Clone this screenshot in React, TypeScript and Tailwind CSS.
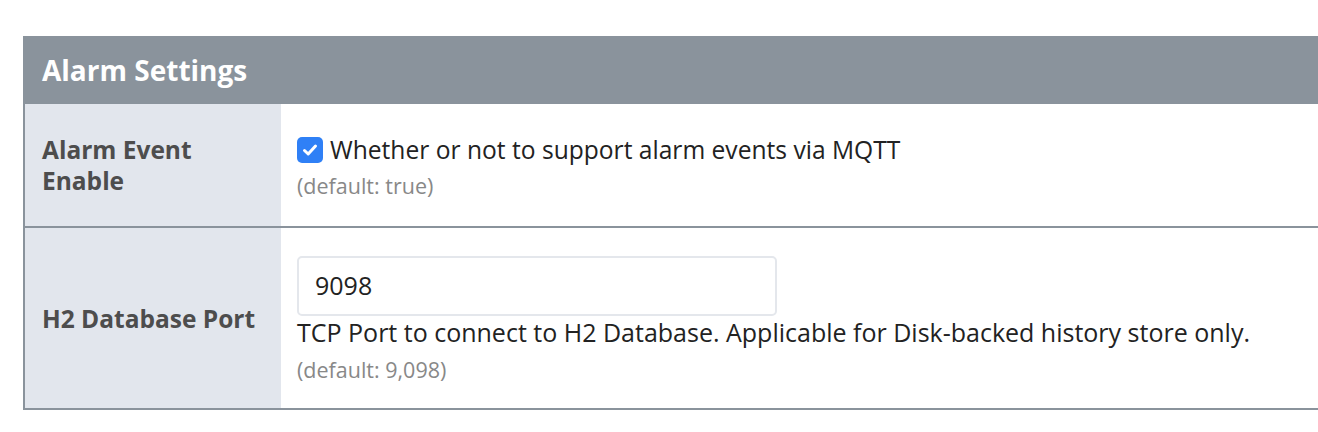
import React from "react";

export default function App() {
  return (
    <div className="w-[1318px] h-[432px] overflow-hidden bg-white pt-[36px] pl-[23px]" style={{ fontFamily: "'Open Sans', 'Noto Sans', sans-serif" }}>
      <div className="w-[1330px] border-l-2 border-[#8a939c]">
        <div className="h-[68px] bg-[#8a939c] flex items-center pl-[17px]">
          <span className="text-white font-bold text-[28px] leading-none">Alarm Settings</span>
        </div>
        <div className="flex h-[124px] border-b-2 border-[#8a939c]">
          <div className="w-[256px] shrink-0 bg-[#e2e6ed] flex items-center pl-[17px]">
            <span className="text-[#4d4d4d] font-bold text-[24.5px] leading-[31px]">Alarm Event<br />Enable</span>
          </div>
          <div className="flex flex-col justify-center pl-[16px]">
            <div className="flex items-center gap-[7px] h-[28px] mt-[3px]">
              <div className="w-[26px] h-[26px] rounded-[5px] bg-[#2f80f6] flex items-center justify-center">
                <svg width="18" height="18" viewBox="0 0 18 18" fill="none">
                  <path d="M3.5 9.5 L7.2 13 L14.5 5" stroke="white" strokeWidth="3" strokeLinecap="round" strokeLinejoin="round" />
                </svg>
              </div>
              <span className="text-[#222] text-[24.6px] leading-none">Whether or not to support alarm events via MQTT</span>
            </div>
            <div className="text-[#888] text-[21.5px] leading-none mt-[11px]">(default: true)</div>
          </div>
        </div>
        <div className="flex h-[182px] border-b-2 border-[#8a939c]">
          <div className="w-[256px] shrink-0 bg-[#e2e6ed] flex items-center pl-[17px]">
            <span className="text-[#4d4d4d] font-bold text-[24.5px] leading-[31px]">H2 Database Port</span>
          </div>
          <div className="flex flex-col justify-center pl-[16px]">
            <div className="w-[480px] h-[60px] border-2 border-[#e4e7ec] rounded-[5px] flex items-center pl-[16px] text-[#222] text-[25px]">9098</div>
            <div className="text-[#222] text-[25px] leading-none mt-[4px]">TCP Port to connect to H2 Database. Applicable for Disk-backed history store only.</div>
            <div className="text-[#888] text-[21.5px] leading-none mt-[14px]">(default: 9,098)</div>
          </div>
        </div>
      </div>
    </div>
  );
}
